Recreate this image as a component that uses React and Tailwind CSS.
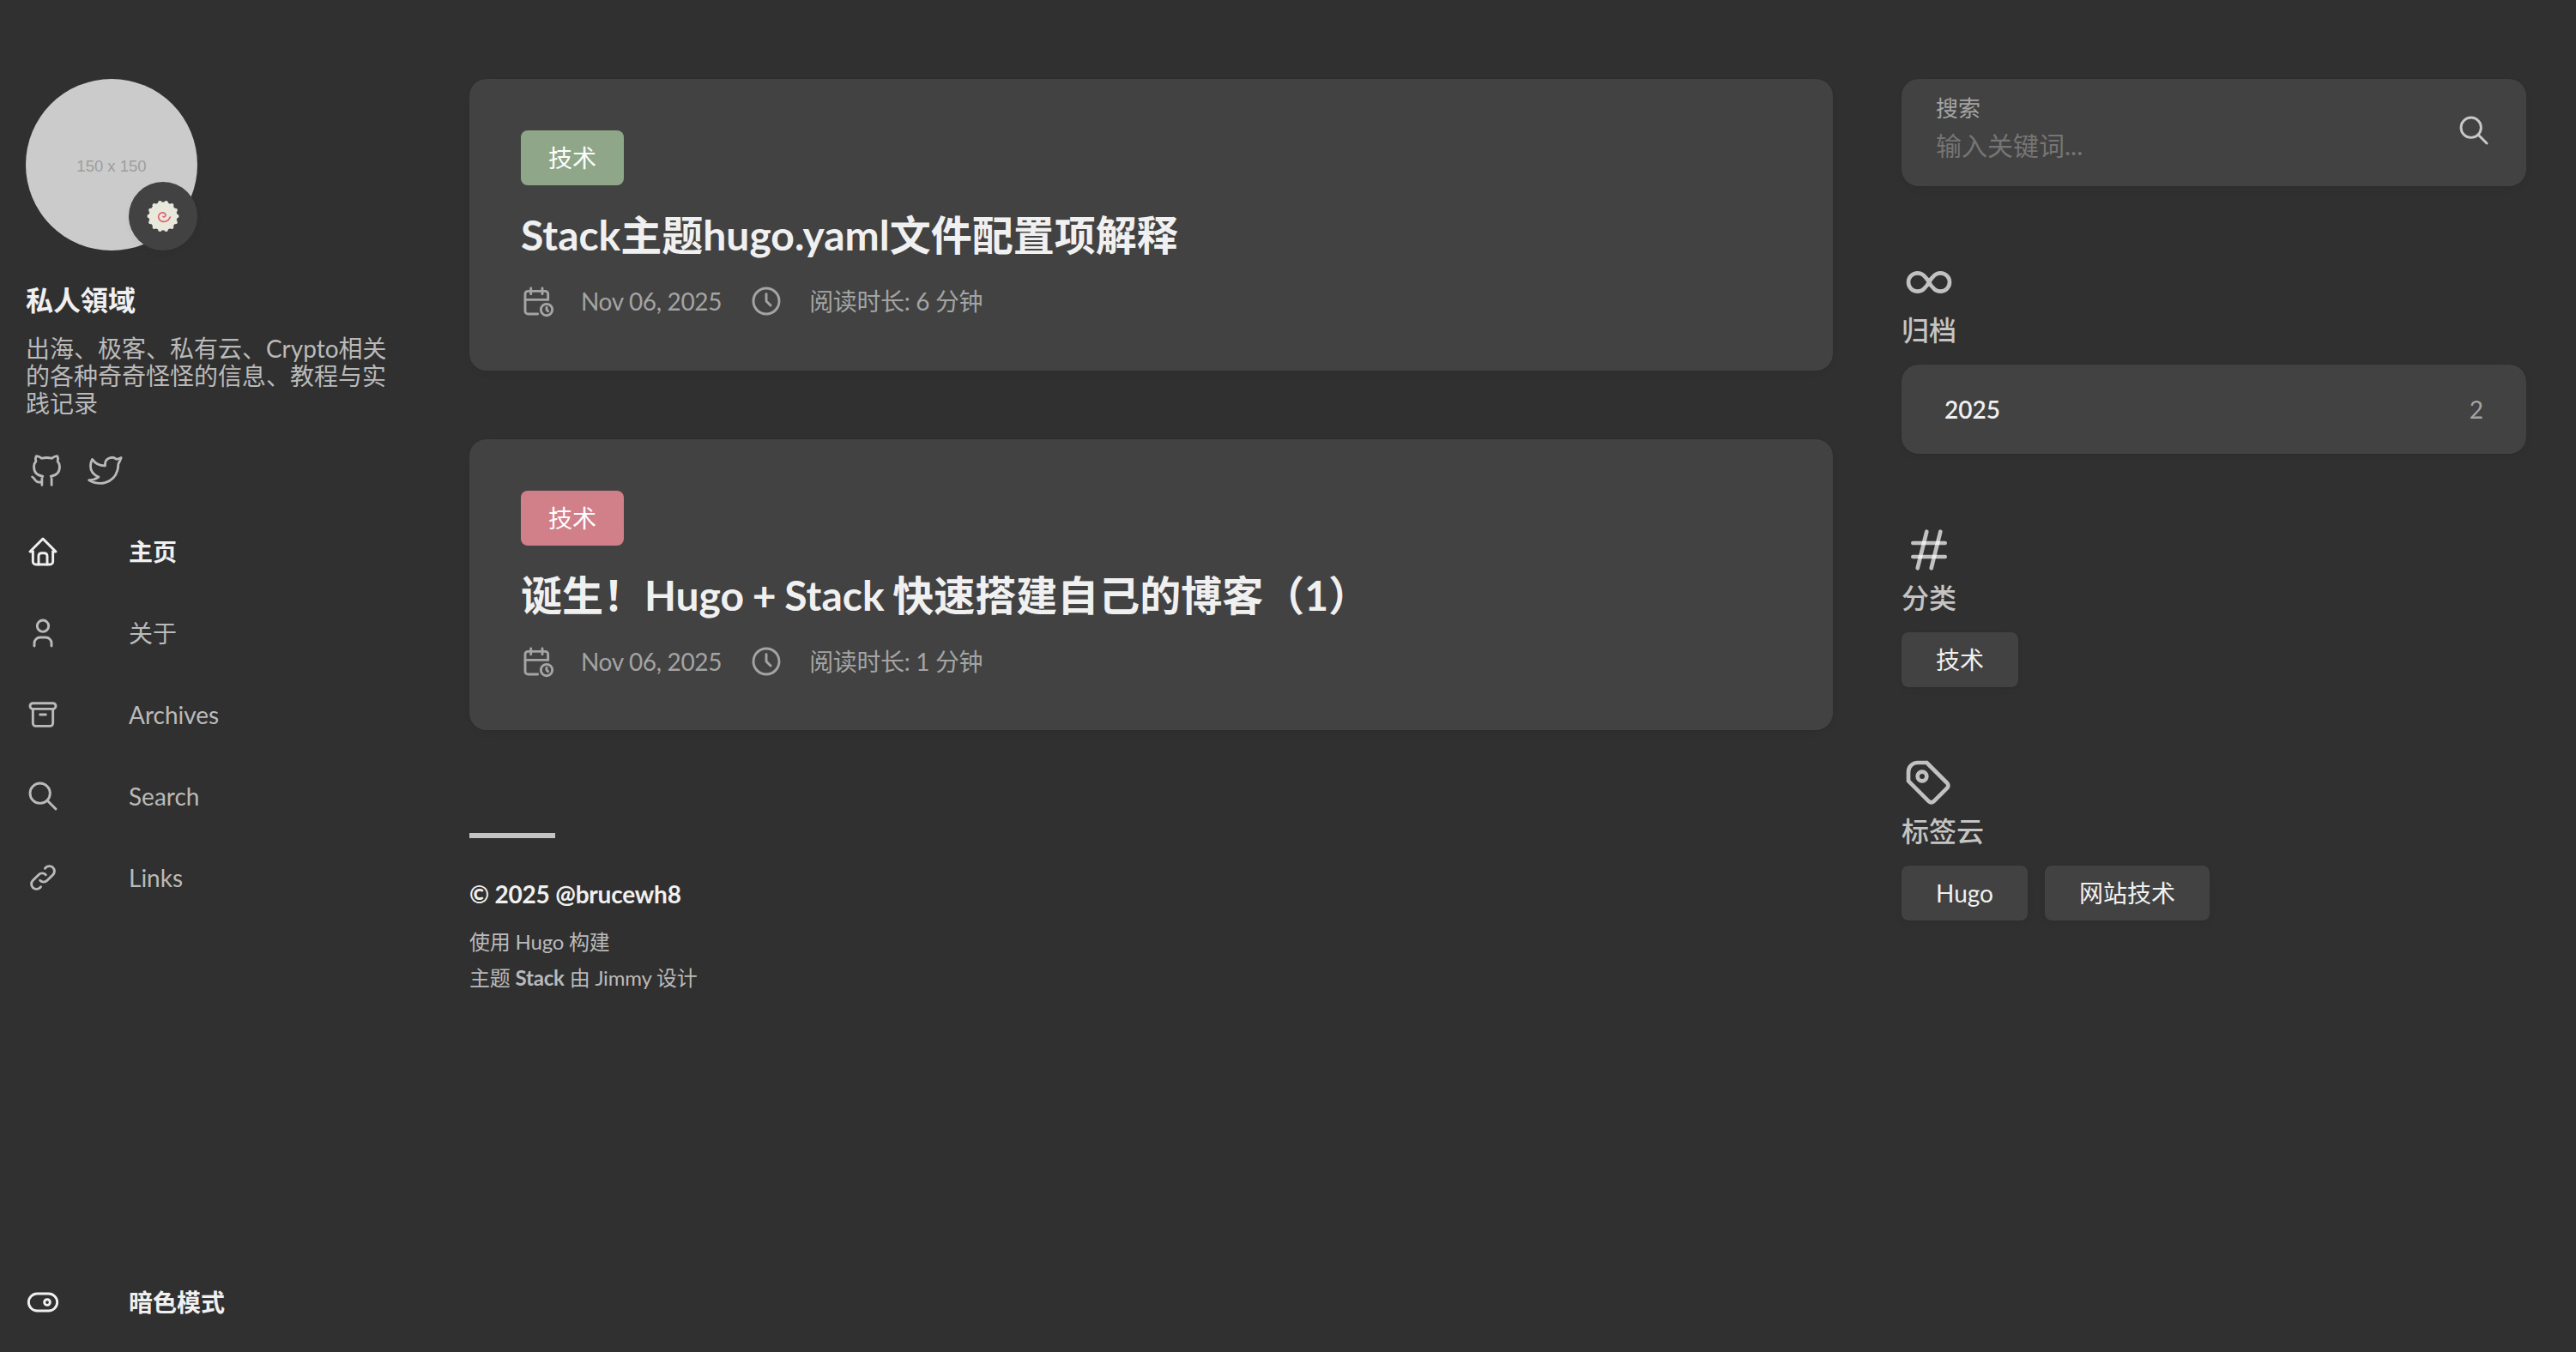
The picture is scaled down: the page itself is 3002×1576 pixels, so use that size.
import React from 'react';

const Icon = ({ size = 40, width = 1.75, className = '', children }) => (
  <svg
    width={size}
    height={size}
    viewBox="0 0 24 24"
    fill="none"
    stroke="currentColor"
    strokeWidth={width}
    strokeLinecap="round"
    strokeLinejoin="round"
    className={`shrink-0 ${className}`}
  >
    {children}
  </svg>
);

const icons = {
  home: <><polyline points="5 12 3 12 12 3 21 12 19 12" /><path d="M5 12v7a2 2 0 0 0 2 2h10a2 2 0 0 0 2 -2v-7" /><path d="M9 21v-6a2 2 0 0 1 2 -2h2a2 2 0 0 1 2 2v6" /></>,
  user: <><circle cx="12" cy="7" r="4" /><path d="M6 21v-2a4 4 0 0 1 4 -4h4a4 4 0 0 1 4 4v2" /></>,
  archive: <><rect x="3" y="4" width="18" height="4" rx="2" /><path d="M5 8v10a2 2 0 0 0 2 2h10a2 2 0 0 0 2 -2v-10" /><line x1="10" y1="12" x2="14" y2="12" /></>,
  search: <><circle cx="10" cy="10" r="7" /><line x1="21" y1="21" x2="15" y2="15" /></>,
  link: <><path d="M10 14a3.5 3.5 0 0 0 5 0l4 -4a3.5 3.5 0 0 0 -5 -5l-.5 .5" /><path d="M14 10a3.5 3.5 0 0 0 -5 0l-4 4a3.5 3.5 0 0 0 5 5l.5 -.5" /></>,
  github: <path d="M9 19c-4.3 1.4 -4.3 -2.5 -6 -3m12 5v-3.5c0 -1 .1 -1.4 -.5 -2c2.8 -.3 5.5 -1.4 5.5 -6a4.6 4.6 0 0 0 -1.3 -3.2a4.2 4.2 0 0 0 -.1 -3.2s-1.1 -.3 -3.5 1.3a12.3 12.3 0 0 0 -6.2 0c-2.4 -1.6 -3.5 -1.3 -3.5 -1.3a4.2 4.2 0 0 0 -.1 3.2a4.6 4.6 0 0 0 -1.3 3.2c0 4.6 2.7 5.7 5.5 6c-.6 .6 -.6 1.2 -.5 2v3.5" />,
  twitter: <path d="M22 4.01c-1 .49 -1.98 .689 -3 .99c-1.121 -1.265 -2.783 -1.335 -4.38 -.737s-2.643 2.06 -2.62 3.737v1c-3.245 .083 -6.135 -1.395 -8 -4c0 0 -4.182 7.433 4 11c-1.872 1.247 -3.739 2.088 -6 2c3.308 1.803 6.913 2.423 10.034 1.517c3.58 -1.04 6.522 -3.723 7.651 -7.742a13.84 13.84 0 0 0 .497 -3.753c-.002 -.249 1.51 -2.772 1.818 -4.013z" />,
  calendar: <><path d="M11.795 21h-6.795a2 2 0 0 1 -2 -2v-12a2 2 0 0 1 2 -2h12a2 2 0 0 1 2 2v4" /><circle cx="18" cy="18" r="4" /><path d="M15 3v4" /><path d="M7 3v4" /><path d="M3 11h16" /><path d="M18 16.496v1.504l1 1" /></>,
  clock: <><circle cx="12" cy="12" r="9" /><polyline points="12 7 12 12 15 15" /></>,
  infinity: <path d="M9.828 9.172a4 4 0 1 0 0 5.656a10 10 0 0 0 2.172 -2.828a10 10 0 0 1 2.172 -2.828a4 4 0 1 1 0 5.656a10 10 0 0 1 -2.172 -2.828a10 10 0 0 0 -2.172 -2.828" />,
  hash: <><line x1="5" y1="9" x2="19" y2="9" /><line x1="5" y1="15" x2="19" y2="15" /><line x1="11" y1="4" x2="7" y2="20" /><line x1="17" y1="4" x2="13" y2="20" /></>,
  tag: <><path d="M11 3l9 9a1.5 1.5 0 0 1 0 2l-6 6a1.5 1.5 0 0 1 -2 0l-9 -9v-4a4 4 0 0 1 4 -4h4" /><circle cx="9" cy="9" r="2" /></>,
  toggle: <><circle cx="15" cy="12" r="2" /><rect x="2" y="6" width="20" height="12" rx="6" /></>,
};

const navItems = [
  { label: '主页', icon: 'home', active: true },
  { label: '关于', icon: 'user' },
  { label: 'Archives', icon: 'archive' },
  { label: 'Search', icon: 'search' },
  { label: 'Links', icon: 'link' },
];

const posts = [
  { title: 'Stack主题hugo.yaml文件配置项解释', read: '阅读时长: 6 分钟', tag: 'bg-[#90a688]' },
  { title: '诞生！Hugo + Stack 快速搭建自己的博客（1）', read: '阅读时长: 1 分钟', tag: 'bg-[#d1808a]' },
];

// naruto emoji in the avatar badge
function Naruto() {
  const teeth = Array.from({ length: 14 }, (_, i) => (i / 14) * Math.PI * 2);
  return (
    <svg width="40" height="40" viewBox="0 0 40 40">
      <circle cx="20" cy="20" r="16.5" fill="#e9e8dd" />
      {teeth.map((a) => (
        <circle key={a} cx={20 + 16.2 * Math.cos(a)} cy={20 + 16.2 * Math.sin(a)} r="2.3" fill="#e9e8dd" />
      ))}
      <path
        d="M20 20.5c1.6 1.2 3.6-.6 2.8-2.6-1-2.4-4.6-2.8-6.6-.8-2.6 2.6-1.6 7 1.6 8.6 4.2 2 9-.4 10.4-4.6"
        fill="none"
        stroke="#e0646f"
        strokeWidth="1.7"
        strokeLinecap="round"
      />
    </svg>
  );
}

function Chip({ children }) {
  return (
    <span className="h-16 px-10 flex items-center rounded-lg bg-[#424242] text-[28px] text-[#f0f0f0] shadow-[0_4px_8px_rgba(0,0,0,0.04),0_0_2px_rgba(0,0,0,0.06)]">
      {children}
    </span>
  );
}

function WidgetTitle({ icon, title }) {
  return (
    <div className="mb-5">
      <Icon size={64} className="text-white/70">{icons[icon]}</Icon>
      <h2 className="mt-1 h-10 leading-10 text-[32px] font-medium text-[#c4c4c4]">{title}</h2>
    </div>
  );
}

export default function App() {
  return (
    <div className="flex h-screen bg-[#303030] text-[#bababa] overflow-hidden [font-family:Lato,'Noto_Sans_CJK_SC',sans-serif]">
      {/* Left sidebar */}
      <aside className="w-[547px] shrink-0 pl-[30px] pt-[92px] pb-[38px] flex flex-col">
        <div className="relative w-[200px] h-[200px]">
          <div className="w-full h-full rounded-full bg-[#cbcbcb] flex items-center justify-center pt-1 text-[18.5px] text-[#9e9e9e] [font-family:'Liberation_Sans',sans-serif]">
            150 x 150
          </div>
          <div className="absolute right-0 bottom-0 w-20 h-20 rounded-full bg-[#424242] flex items-center justify-center shadow-[0_4px_8px_rgba(0,0,0,0.04)]">
            <Naruto />
          </div>
        </div>

        <h1 className="mt-[38px] text-[32px] leading-10 font-semibold text-[#f0f0f0]">私人領域</h1>
        <p className="mt-5 w-[430px] text-[28px] leading-[32px] text-[#bababa]">
          出海、极客、私有云、Crypto相关的各种奇奇怪怪的信息、教程与实践记录
        </p>

        <div className="mt-10 ml-[2px] flex gap-[23px] text-[#bababa]">
          <Icon size={45} width={1.5}>{icons.github}</Icon>
          <Icon size={45} width={1.5}>{icons.twitter}</Icon>
        </div>

        <nav className="mt-[52px] flex flex-col gap-[55px]">
          {navItems.map((item) => (
            <div key={item.label} className={`flex items-center gap-20 h-10 text-[28px] ${item.active ? 'text-[#f0f0f0] font-semibold' : 'text-[#bababa]'}`}>
              <Icon>{icons[item.icon]}</Icon>
              <span>{item.label}</span>
            </div>
          ))}
        </nav>

        <div className="mt-auto flex items-center gap-20 h-10 text-[28px] font-semibold text-[#f0f0f0]">
          <Icon>{icons.toggle}</Icon>
          <span>暗色模式</span>
        </div>
      </aside>

      {/* Posts */}
      <main className="w-[1589px] shrink-0 pt-[92px]">
        <div className="flex flex-col gap-20">
          {posts.map((post) => (
            <article key={post.title} className="h-[339.5px] rounded-[20px] bg-[#424242] px-[60px] pt-[60px] shadow-[0_4px_8px_rgba(0,0,0,0.04),0_0_2px_rgba(0,0,0,0.06)]">
              <span className={`inline-flex items-center h-16 px-8 rounded-lg text-[28px] text-white ${post.tag}`}>技术</span>
              <h2 className="mt-7 text-[48px] leading-[60px] font-bold [word-spacing:-2px] text-[#f0f0f0]">{post.title}</h2>
              <div className="mt-[26px] flex items-center text-[28px] tracking-[-0.35px] text-[#a4a4a4]">
                <Icon className="mr-[30px]">{icons.calendar}</Icon>
                <span>Nov 06, 2025</span>
                <Icon className="ml-[32px] mr-[30px]">{icons.clock}</Icon>
                <span>{post.read}</span>
              </div>
            </article>
          ))}
        </div>

        <footer className="mt-[120px]">
          <div className="w-[100px] h-[6px] bg-[#c4c4c4]" />
          <p className="mt-[47px] text-[28px] leading-9 font-bold tracking-[-0.2px] text-[#f0f0f0]">© 2025 @brucewh8</p>
          <p className="mt-[17px] text-[24px] leading-[42px] tracking-[-0.2px] text-[#bababa]">使用 Hugo 构建</p>
          <p className="text-[24px] leading-[42px] tracking-[-0.2px] text-[#bababa]">主题 <b>Stack</b> 由 Jimmy 设计</p>
        </footer>
      </main>

      {/* Right column */}
      <aside className="w-[728px] shrink-0 ml-20 pt-[92px] flex flex-col gap-20">
        <div className="h-[125px] rounded-[20px] bg-[#424242] pl-[40px] pr-[41px] flex items-center shadow-[0_4px_8px_rgba(0,0,0,0.04),0_0_2px_rgba(0,0,0,0.06)]">
          <div className="flex-1 flex flex-col pb-3">
            <label className="text-[26px] leading-[34px] text-[#a4a4a4]">搜索</label>
            <input
              placeholder="输入关键词..."
              className="mt-[6px] bg-transparent outline-none text-[30px] leading-[40px] placeholder:text-[#757575]"
            />
          </div>
          <Icon className="mb-1.5 text-[#c8c8c8]">{icons.search}</Icon>
        </div>

        <section>
          <WidgetTitle icon="infinity" title="归档" />
          <div className="h-[104px] rounded-[20px] bg-[#424242] px-[50px] flex items-center justify-between text-[28px] shadow-[0_4px_8px_rgba(0,0,0,0.04),0_0_2px_rgba(0,0,0,0.06)]">
            <span className="font-semibold text-[#f0f0f0]">2025</span>
            <span className="text-[#a4a4a4]">2</span>
          </div>
        </section>

        <section>
          <WidgetTitle icon="hash" title="分类" />
          <div className="flex gap-5">
            <Chip>技术</Chip>
          </div>
        </section>

        <section>
          <WidgetTitle icon="tag" title="标签云" />
          <div className="flex gap-5">
            <Chip>Hugo</Chip>
            <Chip>网站技术</Chip>
          </div>
        </section>
      </aside>
    </div>
  );
}
